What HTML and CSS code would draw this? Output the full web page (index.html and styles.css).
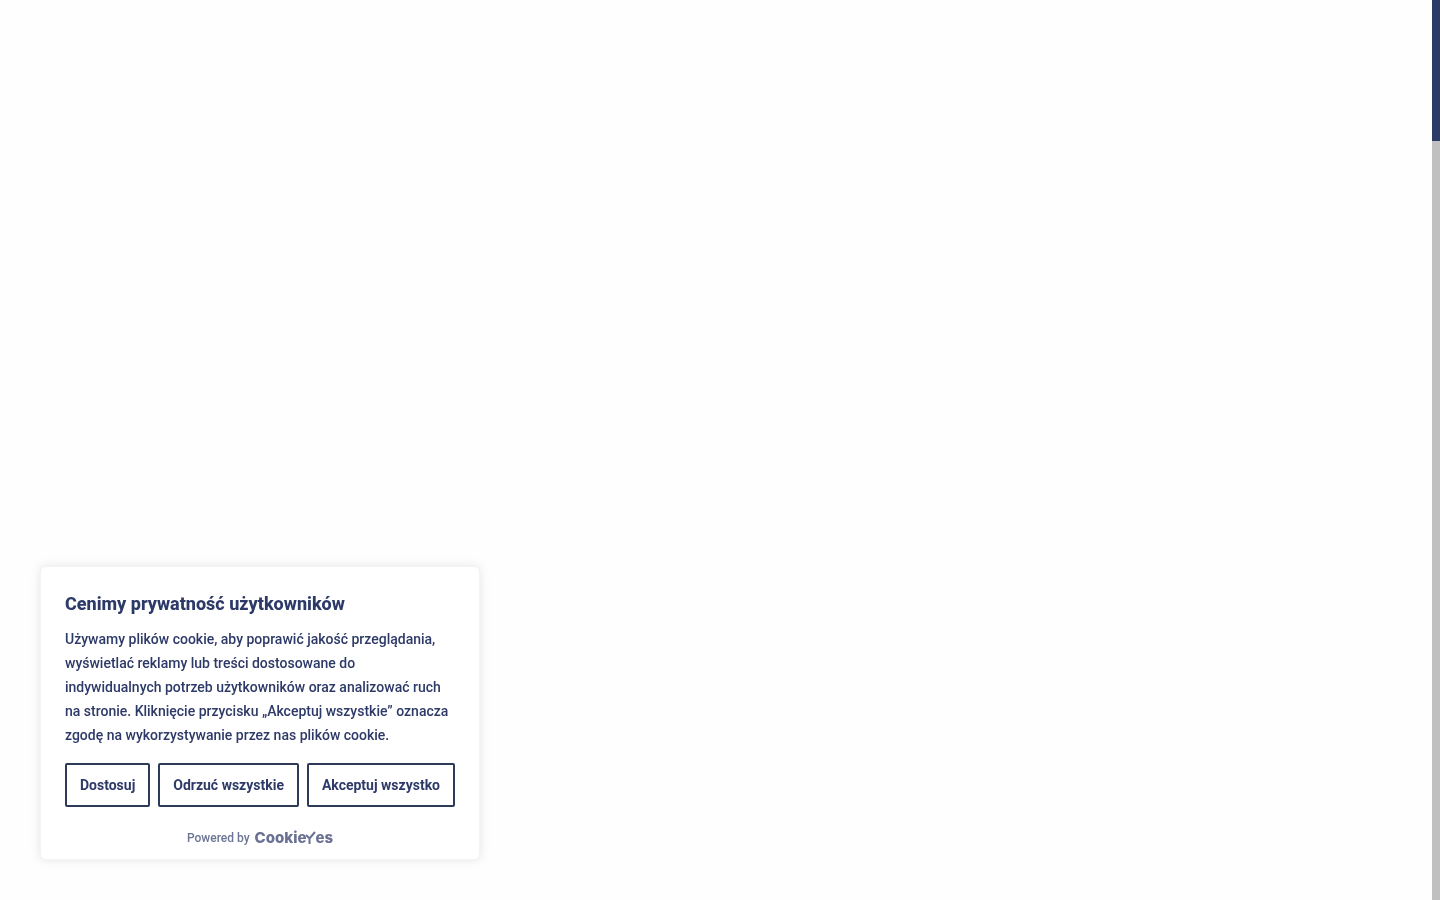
FILE: index.html
```
<!DOCTYPE html>
<html lang="pl">
<head>
  <meta charset="UTF-8">
  <meta name="viewport" content="width=device-width, initial-scale=1.0">
  <title>Cenimy prywatność użytkowników</title>
  <link rel="stylesheet" href="styles.css">
</head>
<body>
  <main class="page"></main>

  <!-- Pasek przewijania -->
  <div class="scroll-track">
    <div class="scroll-thumb"></div>
  </div>

  <!-- Zgoda na pliki cookie -->
  <section class="consent" aria-labelledby="consentTitle">
    <h2 class="consent-title" id="consentTitle">Cenimy prywatność użytkowników</h2>
    <p class="consent-text">
      Używamy plików cookie, aby poprawić jakość przeglądania,<br>
      wyświetlać reklamy lub treści dostosowane do<br>
      indywidualnych potrzeb użytkowników oraz analizować ruch<br>
      na stronie. Kliknięcie przycisku „Akceptuj wszystkie” oznacza<br>
      zgodę na wykorzystywanie przez nas plików cookie.
    </p>
    <div class="consent-buttons">
      <button type="button">Dostosuj</button>
      <button type="button">Odrzuć wszystkie</button>
      <button type="button">Akceptuj wszystko</button>
    </div>
    <div class="powered">
      <span>Powered by</span>
      <a class="brand" href="#" aria-label="CookieYes"><span>Cookie</span><svg class="brand-y" viewBox="0 0 12 14" aria-hidden="true"><path d="M2 4 L5.5 7.5 L11 1 M5.5 7 V13"/></svg><span>es</span></a>
    </div>
  </section>
</body>
</html>
```
FILE: styles.css
```
* {
  box-sizing: border-box;
}
body {
  margin: 0;
  min-height: 100vh;
  display: flex;
  background-color: #fefefe;
  color: #2d3a68;
  font-family: Roboto, "Liberation Sans", sans-serif;
}
.page {
  flex: 1;
}
.scroll-track {
  width: 8px;
  background-color: #c0c0c0;
}
.scroll-thumb {
  height: 141px;
  background-color: #2d3a68;
}
.consent {
  position: fixed;
  left: 40px;
  bottom: 40px;
  width: 440px;
  max-width: calc(100% - 80px);
  padding: 24px 24px 12px;
  background: #ffffff;
  border: 1px solid #f4f4f4;
  border-radius: 6px;
  box-shadow: 0 0 10px rgba(172, 171, 171, 0.3);
}
.consent-title {
  margin: 0 0 10px;
  font-size: 18px;
  line-height: 26px;
  font-weight: 800;
}
.consent-text {
  margin: 0 0 16px;
  font-size: 14px;
  font-weight: 500;
  line-height: 24px;
}
.consent-buttons {
  display: flex;
  gap: 8px;
}
button {
  flex: 1 1 auto;
  height: 44px;
  padding: 0 10px;
  background: transparent;
  border: 2px solid #2d3a58;
  border-radius: 2px;
  color: #2d3a68;
  font-family: inherit;
  font-size: 14px;
  font-weight: 700;
  line-height: 24px;
  white-space: nowrap;
  cursor: pointer;
}
.powered {
  display: flex;
  justify-content: center;
  align-items: center;
  gap: 5px;
  margin-top: 22px;
  color: #6c7595;
  font-size: 12px;
  font-weight: 500;
  line-height: 18px;
}
.brand {
  display: flex;
  align-items: center;
  color: #6b7193;
  font-family: Inter, "Liberation Sans", sans-serif;
  font-size: 15px;
  font-weight: 800;
  text-decoration: none;
}
.brand-y {
  width: 12px;
  height: 14px;
  margin: 0 -1px 0 -2px;
  fill: none;
  stroke: #6b7193;
  stroke-width: 2;
}
```
